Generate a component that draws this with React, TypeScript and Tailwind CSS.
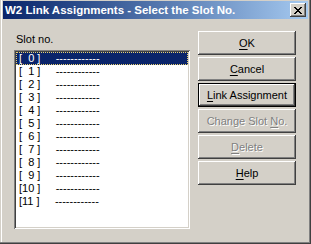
import React from 'react';

const face = 'bg-[#d4d0c8]';
const raised =
  'shadow-[inset_-1px_-1px_#404040,inset_1px_1px_#ffffff,inset_-2px_-2px_#808080,inset_2px_2px_#d4d0c8]';

const slots = Array.from({ length: 12 }, (_, i) => i);

const Btn: React.FC<{ children: React.ReactNode; disabled?: boolean; isDefault?: boolean }> = ({
  children,
  disabled,
  isDefault,
}) => (
  <div className={`h-[24px] w-[98px] ${isDefault ? 'border border-black' : ''}`}>
    <div
      className={`h-full w-full flex items-center justify-center ${face} ${raised} ${
        disabled ? 'text-[#808080] [text-shadow:1px_1px_0_#ffffff]' : 'text-black'
      }`}
    >
      <span className="whitespace-pre">{children}</span>
    </div>
  </div>
);

export default function App() {
  return (
    <div
      className={`relative w-[311px] h-[244px] ${face} overflow-hidden text-[11px] leading-[13px] shadow-[inset_-1px_-1px_#404040,inset_-2px_-2px_#808080,inset_1px_0_#d4d0c8,inset_2px_0_#ffffff]`}
      style={{ fontFamily: '"Liberation Sans", Arial, sans-serif' }}
    >
      {/* title bar */}
      <div className="mt-[1px] mx-[3px] h-[18px] flex items-center pl-[2px] pr-[2px] bg-gradient-to-r from-[#0a246a] to-[#a6caf0]">
        <span className="text-white font-bold text-[11.5px] whitespace-nowrap">
          W2 Link Assignments - Select the Slot No.
        </span>
        <div className={`ml-auto w-[16px] h-[14px] ${face} ${raised} flex items-center justify-center`}>
          <svg width="8" height="7" viewBox="0 0 8 7" shapeRendering="crispEdges">
            <path
              fill="#000"
              d="M0 0h2v1h-2zM6 0h2v1h-2zM1 1h2v1h-2zM5 1h2v1h-2zM2 2h4v1h-4zM3 3h2v1h-2zM2 4h4v1h-4zM1 5h2v1h-2zM5 5h2v1h-2zM0 6h2v1h-2zM6 6h2v1h-2z"
            />
          </svg>
        </div>
      </div>

      <div className="flex pl-[14px] gap-[8px]">
        {/* slot list */}
        <div className="flex flex-col pt-[14px]">
          <div className="pl-[2px] h-[13px] text-black">Slot no.</div>
          <div className="mt-[4px] w-[176px] h-[179px] bg-white p-[2px] shadow-[inset_1px_1px_#808080,inset_-1px_-1px_#ffffff,inset_2px_2px_#404040,inset_-2px_-2px_#d4d0c8]">
            {slots.map((n) => {
              const sel = n === 0;
              return (
                <div
                  key={n}
                  className={`h-[13px] flex items-center whitespace-pre pl-[3px] ${
                    sel
                      ? 'bg-[#0a246a] text-white outline-1 outline-dotted outline-[#e8d070] -outline-offset-1'
                      : 'text-black'
                  }`}
                >
                  <span>{`[${n < 10 ? '  ' + n : n} ]     `}</span>
                  <span>------------</span>
                </div>
              );
            })}
          </div>
        </div>

        {/* buttons */}
        <div className="flex flex-col gap-[2px] pt-[12px]">
          <Btn>
            <span className="underline underline-offset-2">O</span>K
          </Btn>
          <Btn>
            <span className="underline underline-offset-2">C</span>ancel
          </Btn>
          <Btn isDefault>
            <span className="underline underline-offset-2">L</span>ink Assignment
          </Btn>
          <Btn disabled>
            Change Slot <span className="underline underline-offset-2">N</span>o.
          </Btn>
          <Btn disabled>
            <span className="underline underline-offset-2">D</span>elete
          </Btn>
          <Btn>
            <span className="underline underline-offset-2">H</span>elp
          </Btn>
        </div>
      </div>
    </div>
  );
}
